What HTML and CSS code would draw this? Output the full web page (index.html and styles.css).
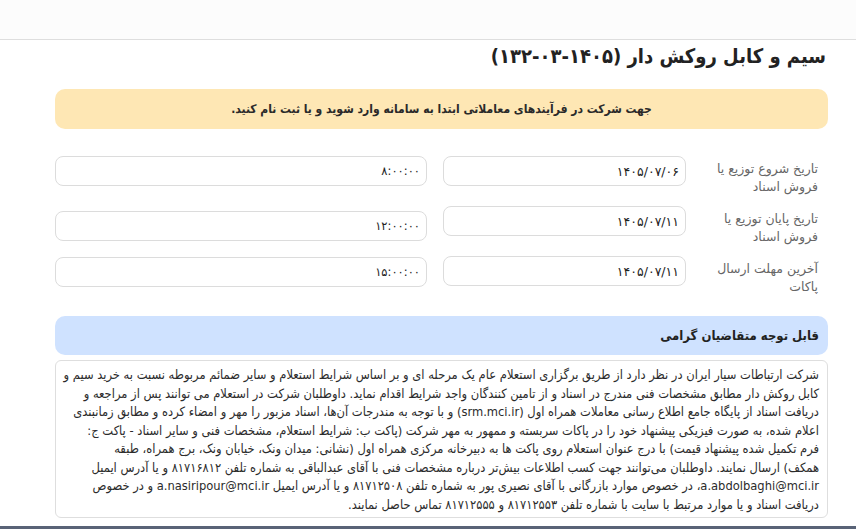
FILE: index.html
```html
<!DOCTYPE html>
<html lang="fa" dir="rtl">
<head>
<meta charset="utf-8">
<title>سیم و کابل روکش دار</title>
<link rel="stylesheet" href="styles.css">
</head>
<body>
<div class="topbar"></div>
<main class="main">
  <h1 class="title">سیم و کابل روکش دار (۱۴۰۵-۰۳-۱۳۲)</h1>
  <div class="alert">جهت شرکت در فرآیندهای معاملاتی ابتدا به سامانه وارد شوید و یا ثبت نام کنید.</div>
  <div class="form">
    <div class="label">تاریخ شروع توزیع یا فروش اسناد</div>
    <div class="field">۱۴۰۵/۰۷/۰۶</div>
    <div class="field time">۸:۰۰:۰۰</div>

    <div class="label">تاریخ پایان توزیع یا فروش اسناد</div>
    <div class="field">۱۴۰۵/۰۷/۱۱</div>
    <div class="field time time-2">۱۲:۰۰:۰۰</div>

    <div class="label">آخرین مهلت ارسال پاکات</div>
    <div class="field">۱۴۰۵/۰۷/۱۱</div>
    <div class="field time time-3">۱۵:۰۰:۰۰</div>
  </div>
  <div class="notice-head">قابل توجه متقاضیان گرامی</div>
  <div class="notice-body">شرکت ارتباطات سیار ایران در نظر دارد از طریق برگزاری استعلام عام یک مرحله ای و بر اساس شرایط استعلام و سایر ضمائم مربوطه نسبت به خرید سیم و<br>کابل روکش دار مطابق مشخصات فنی مندرج در اسناد و از تامین کنندگان واجد شرایط اقدام نماید. داوطلبان شرکت در استعلام می توانند پس از مراجعه و<br>دریافت اسناد از پایگاه جامع اطلاع رسانی معاملات همراه اول (srm.mci.ir) و با توجه به مندرجات آن‌ها، اسناد مزبور را مهر و امضاء کرده و مطابق زمانبندی<br>اعلام شده، به صورت فیزیکی پیشنهاد خود را در پاکات سربسته و ممهور به مهر شرکت (پاکت ب: شرایط استعلام، مشخصات فنی و سایر اسناد - پاکت ج:<br>فرم تکمیل شده پیشنهاد قیمت) با درج عنوان استعلام روی پاکت ها به دبیرخانه مرکزی همراه اول (نشانی: میدان ونک، خیابان ونک، برج همراه، طبقه<br>همکف) ارسال نمایند. داوطلبان می‌توانند جهت کسب اطلاعات بیش‌تر درباره مشخصات فنی با آقای عبدالباقی به شماره تلفن ۸۱۷۱۶۸۱۲ و یا آدرس ایمیل<br>a.abdolbaghi@mci.ir، در خصوص موارد بازرگانی با آقای نصیری پور به شماره تلفن ۸۱۷۱۲۵۰۸ و یا آدرس ایمیل a.nasiripour@mci.ir و در خصوص<br>دریافت اسناد و یا موارد مرتبط با سایت با شماره تلفن ۸۱۷۱۲۵۵۳ و ۸۱۷۱۲۵۵۵ تماس حاصل نمایند.</div>
  <div class="footer"></div>
</main>
</body>
</html>
```

FILE: styles.css
```css
* { box-sizing: border-box; }
html, body { overflow: hidden; }
body {
  margin: 0;
  background: #ffffff;
  font-family: "DejaVu Sans", sans-serif;
  color: #222;
  direction: rtl;
}
.topbar {
  height: 40px;
  background: #fcfcfc;
  border-bottom: 1px solid #dedede;
}
.main {
  padding: 0 28px 0 55px;
}
.title {
  margin: 1px 2px 0 0;
  font-family: "DejaVu Sans Condensed", "DejaVu Sans", sans-serif;
  font-size: 20px;
  line-height: 30px;
  font-weight: bold;
  color: #222;
}
.alert {
  margin-top: 18px;
  height: 40px;
  background: #fee7b4;
  border-radius: 10px;
  display: flex;
  align-items: center;
  justify-content: center;
  font-family: "DejaVu Sans Condensed", "DejaVu Sans", sans-serif;
  font-size: 12px;
  font-weight: bold;
  color: #2a2a2a;
}
.form {
  margin-top: 27px;
  display: grid;
  grid-template-columns: 142px 243px 1fr;
  grid-auto-rows: 50px;
}
.label {
  padding: 4px 10px 0 12px;
  font-size: 12.5px;
  line-height: 18px;
  color: #666;
}
.field {
  height: 30px;
  border: 1px solid #dcdcdc;
  border-radius: 8px;
  background: #fff;
  padding: 0 6px;
  display: flex;
  align-items: center;
  font-size: 12.5px;
  color: #222;
}
.time { margin-right: 16px; font-size: 11.5px; }
.time-2 { margin-top: 5px; }
.time-3 { margin-top: 1px; }
.notice-head {
  margin-top: 10px;
  height: 39px;
  background: #cfe2ff;
  border-radius: 10px;
  padding-right: 9px;
  display: flex;
  align-items: center;
  font-family: "DejaVu Sans Condensed", "DejaVu Sans", sans-serif;
  font-size: 13px;
  font-weight: bold;
  color: #222;
}
.notice-body {
  margin-top: 5px;
  border: 1px solid #dedede;
  border-radius: 6px;
  padding: 5px 8px 3px;
  font-family: "DejaVu Sans Condensed", "DejaVu Sans", sans-serif;
  font-size: 12.8px;
  line-height: 18.5px;
  color: #2b2b2b;
  white-space: nowrap;
}
.footer {
  margin: 8px -28px 0 -55px;
  height: 3px;
  background: #596377;
}
```
